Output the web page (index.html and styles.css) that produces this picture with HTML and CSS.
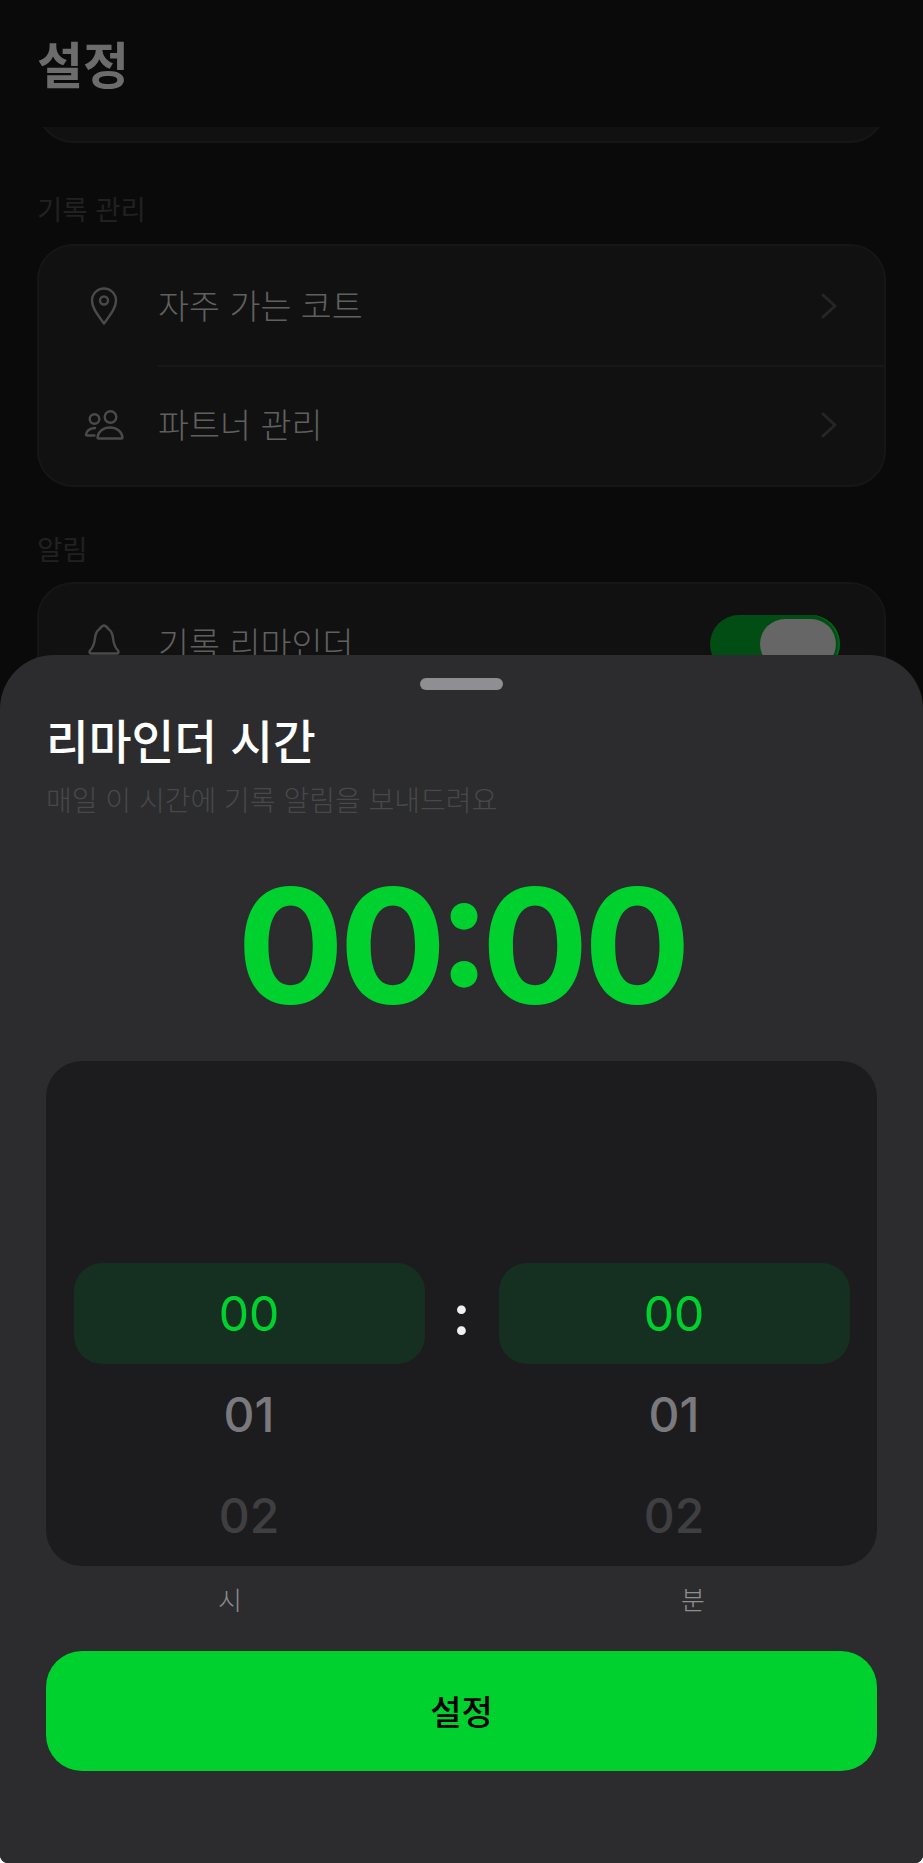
FILE: index.html
```html
<!DOCTYPE html>
<html lang="ko">
<head>
    <meta charset="UTF-8">
    <meta name="viewport" content="width=device-width, initial-scale=1.0">
    <title>설정</title>
    <link rel="stylesheet" href="styles.css">
</head>
<body>
    <div class="screen">
        <header class="page-header">
            <h1>설정</h1>
        </header>

        <main class="settings">
            <div class="card card-cut"></div>

            <h2 class="section-label section-first">기록 관리</h2>
            <div class="card">
                <div class="row">
                    <svg class="row-icon" width="44" height="44" viewBox="0 0 44 44" fill="none" stroke="#4a4a4a" stroke-width="2.4" stroke-linecap="round" stroke-linejoin="round">
                        <path d="M22 39.500C15 30 10 23.500 10 16.500a12 12 0 0 1 24 0C34 23.500 29 30 22 39.500z"/>
                        <circle cx="22" cy="16.500" r="4"/>
                    </svg>
                    <span class="row-text">자주 가는 코트</span>
                    <svg class="chevron" width="16" height="26" viewBox="0 0 16 26" fill="none" stroke="#262626" stroke-width="3" stroke-linecap="round" stroke-linejoin="round">
                        <path d="M2 2l12 11L2 24"/>
                    </svg>
                </div>
                <div class="row">
                    <svg class="row-icon" width="44" height="44" viewBox="0 0 44 44" fill="none" stroke="#4a4a4a" stroke-width="2.4" stroke-linecap="round" stroke-linejoin="round">
                        <circle cx="12.500" cy="16" r="4.800"/>
                        <circle cx="28.500" cy="14" r="5.800"/>
                        <path d="M12.500 32.500H5.500c-1 0-1.500-.5-1.500-1 .5-3.500 4-6 9-6.500"/>
                        <path d="M15.500 34.500c.5-6 6-10 12.500-10s12 4 12.500 10c0 .5-.5 1-1 1H16.500c-.5 0-1-.5-1-1z"/>
                    </svg>
                    <span class="row-text">파트너 관리</span>
                    <svg class="chevron" width="16" height="26" viewBox="0 0 16 26" fill="none" stroke="#262626" stroke-width="3" stroke-linecap="round" stroke-linejoin="round">
                        <path d="M2 2l12 11L2 24"/>
                    </svg>
                </div>
            </div>

            <h2 class="section-label">알림</h2>
            <div class="card">
                <div class="row">
                    <svg class="row-icon" width="44" height="44" viewBox="0 0 44 44" fill="none" stroke="#4a4a4a" stroke-width="2.4" stroke-linecap="round" stroke-linejoin="round">
                        <path d="M22 3.500c2 0 3 1.500 4.500 3.500 3 2 4 5 4.500 9 .5 5 1.500 9 5 12.500 1 1.500.5 3-1 3H9c-1.500 0-2-1.500-1-3 3.500-3.500 4.500-7.500 5-12.500.5-4 1.500-7 4.500-9C19 5 20 3.500 22 3.500z"/>
                    </svg>
                    <span class="row-text">기록 리마인더</span>
                    <span class="toggle"><span class="knob"></span></span>
                </div>
            </div>
        </main>

        <section class="sheet">
            <div class="handle"></div>
            <h2 class="sheet-title">리마인더 시간</h2>
            <p class="sheet-sub">매일 이 시간에 기록 알림을 보내드려요</p>
            <div class="big-time">00<span class="big-colon">:</span>00</div>

            <div class="picker">
                <div class="wheel">
                    <div class="wheel-item selected">00</div>
                    <div class="wheel-item near">01</div>
                    <div class="wheel-item far">02</div>
                </div>
                <div class="picker-colon">:</div>
                <div class="wheel">
                    <div class="wheel-item selected">00</div>
                    <div class="wheel-item near">01</div>
                    <div class="wheel-item far">02</div>
                </div>
            </div>

            <div class="units">
                <span>시</span>
                <span>분</span>
            </div>

            <button class="confirm">설정</button>
        </section>
    </div>
</body>
</html>
```

FILE: styles.css
```css
* {
    box-sizing: border-box;
}
html, body {
    margin: 0;
    height: 100%;
    background: #fff;
}
body {
    font-family: "Inter", "Noto Sans CJK KR", sans-serif;
}
.screen {
    position: relative;
    height: 1863px;
    overflow: hidden;
    background: #0a0a0a;
    border-radius: 0 0 8px 8px;
}
.page-header {
    height: 127px;
    padding: 26px 37px 0;
    background: #0a0a0a;
    position: relative;
    z-index: 1;
}
.page-header h1 {
    margin: 0;
    font-family: "Noto Sans CJK KR", sans-serif;
    font-size: 50px;
    line-height: 72px;
    font-weight: 700;
    color: #6c6c6c;
}
.settings {
    padding: 0 37px;
}
.card {
    background: #111111;
    border: 2px solid #161616;
    border-radius: 36px;
}
.card-cut {
    height: 121px;
    margin-top: -105px;
}
.section-label {
    margin: 43px 0 0;
    height: 52px;
    font-family: "Noto Sans CJK KR", sans-serif;
    font-size: 27.500px;
    line-height: 36px;
    font-weight: 400;
    color: #212121;
}
.section-first {
    margin-top: 47px;
    height: 54px;
}
.row {
    display: flex;
    align-items: center;
    height: 119.500px;
    padding-left: 42.500px;
    position: relative;
}
.row + .row::before {
    content: "";
    position: absolute;
    top: -1px;
    left: 119px;
    right: 0;
    height: 2px;
    background: #181818;
}
.row-icon {
    flex: none;
}
.row-text {
    margin-left: 32.500px;
    padding-bottom: 3px;
    font-family: "Noto Sans CJK KR", sans-serif;
    font-size: 33.700px;
    font-weight: 300;
    color: #606060;
}
.chevron {
    margin-left: auto;
    margin-right: 47px;
}
.toggle {
    margin-left: auto;
    margin-right: 44px;
    width: 130px;
    height: 58px;
    padding: 4px;
    display: flex;
    justify-content: flex-end;
    background: #024d14;
    border-radius: 29px;
    box-shadow: inset -2px 0 0 #02651a;
}
.knob {
    width: 76px;
    height: 50px;
    background: #666;
    border-radius: 25px;
}
.sheet {
    position: absolute;
    left: 0;
    right: 0;
    top: 655px;
    bottom: 0;
    padding: 0 46px;
    background: #2c2c2e;
    border-radius: 54px 54px 0 0;
}
.handle {
    width: 83px;
    height: 12px;
    margin: 23px auto 0;
    background: #8e8e93;
    border-radius: 6px;
}
.sheet-title {
    margin: 15px 0 0;
    font-family: "Noto Sans CJK KR", sans-serif;
    font-size: 46.500px;
    line-height: 68px;
    font-weight: 500;
    color: #fff;
}
.sheet-sub {
    margin: 6px 0 0;
    font-family: "Noto Sans CJK KR", sans-serif;
    font-size: 28px;
    line-height: 40px;
    font-weight: 300;
    color: #48484a;
}
.big-time {
    margin-top: 26px;
    text-align: center;
    font-size: 159px;
    line-height: 200px;
    font-weight: 700;
    letter-spacing: -5px;
    color: #00d12f;
}
.big-colon {
    margin: 0 -4px;
    font-feature-settings: "case" 1;
}
.picker {
    height: 505px;
    margin-top: 16px;
    padding: 202px 27.500px 0;
    display: flex;
    overflow: hidden;
    background: #1c1c1e;
    border-radius: 36px;
}
.wheel {
    flex: 1;
}
.wheel-item {
    height: 101px;
    display: flex;
    align-items: center;
    justify-content: center;
    font-size: 48px;
    font-weight: 500;
}
.selected {
    background: #152f21;
    border-radius: 28px;
    font-weight: 400;
    color: #00d12f;
}
.near {
    color: #7a7a7e;
}
.far {
    color: #3f3f42;
}
.picker-colon {
    width: 74px;
    height: 101px;
    text-align: center;
    font-size: 56px;
    line-height: 104px;
    font-weight: 600;
    color: #f0f0f0;
}
.units {
    display: flex;
    justify-content: space-between;
    margin-top: 13px;
    height: 40px;
    font-family: "Noto Sans CJK KR", sans-serif;
    font-size: 26px;
    line-height: 40px;
    font-weight: 300;
    color: #8e8e93;
}
.units span {
    width: 368px;
    text-align: center;
}
.confirm {
    display: block;
    width: 100%;
    height: 120px;
    margin-top: 32px;
    padding-bottom: 2px;
    border: none;
    border-radius: 36px;
    background: #00d12f;
    font-family: "Noto Sans CJK KR", sans-serif;
    font-size: 34px;
    font-weight: 500;
    color: #000;
}
```
